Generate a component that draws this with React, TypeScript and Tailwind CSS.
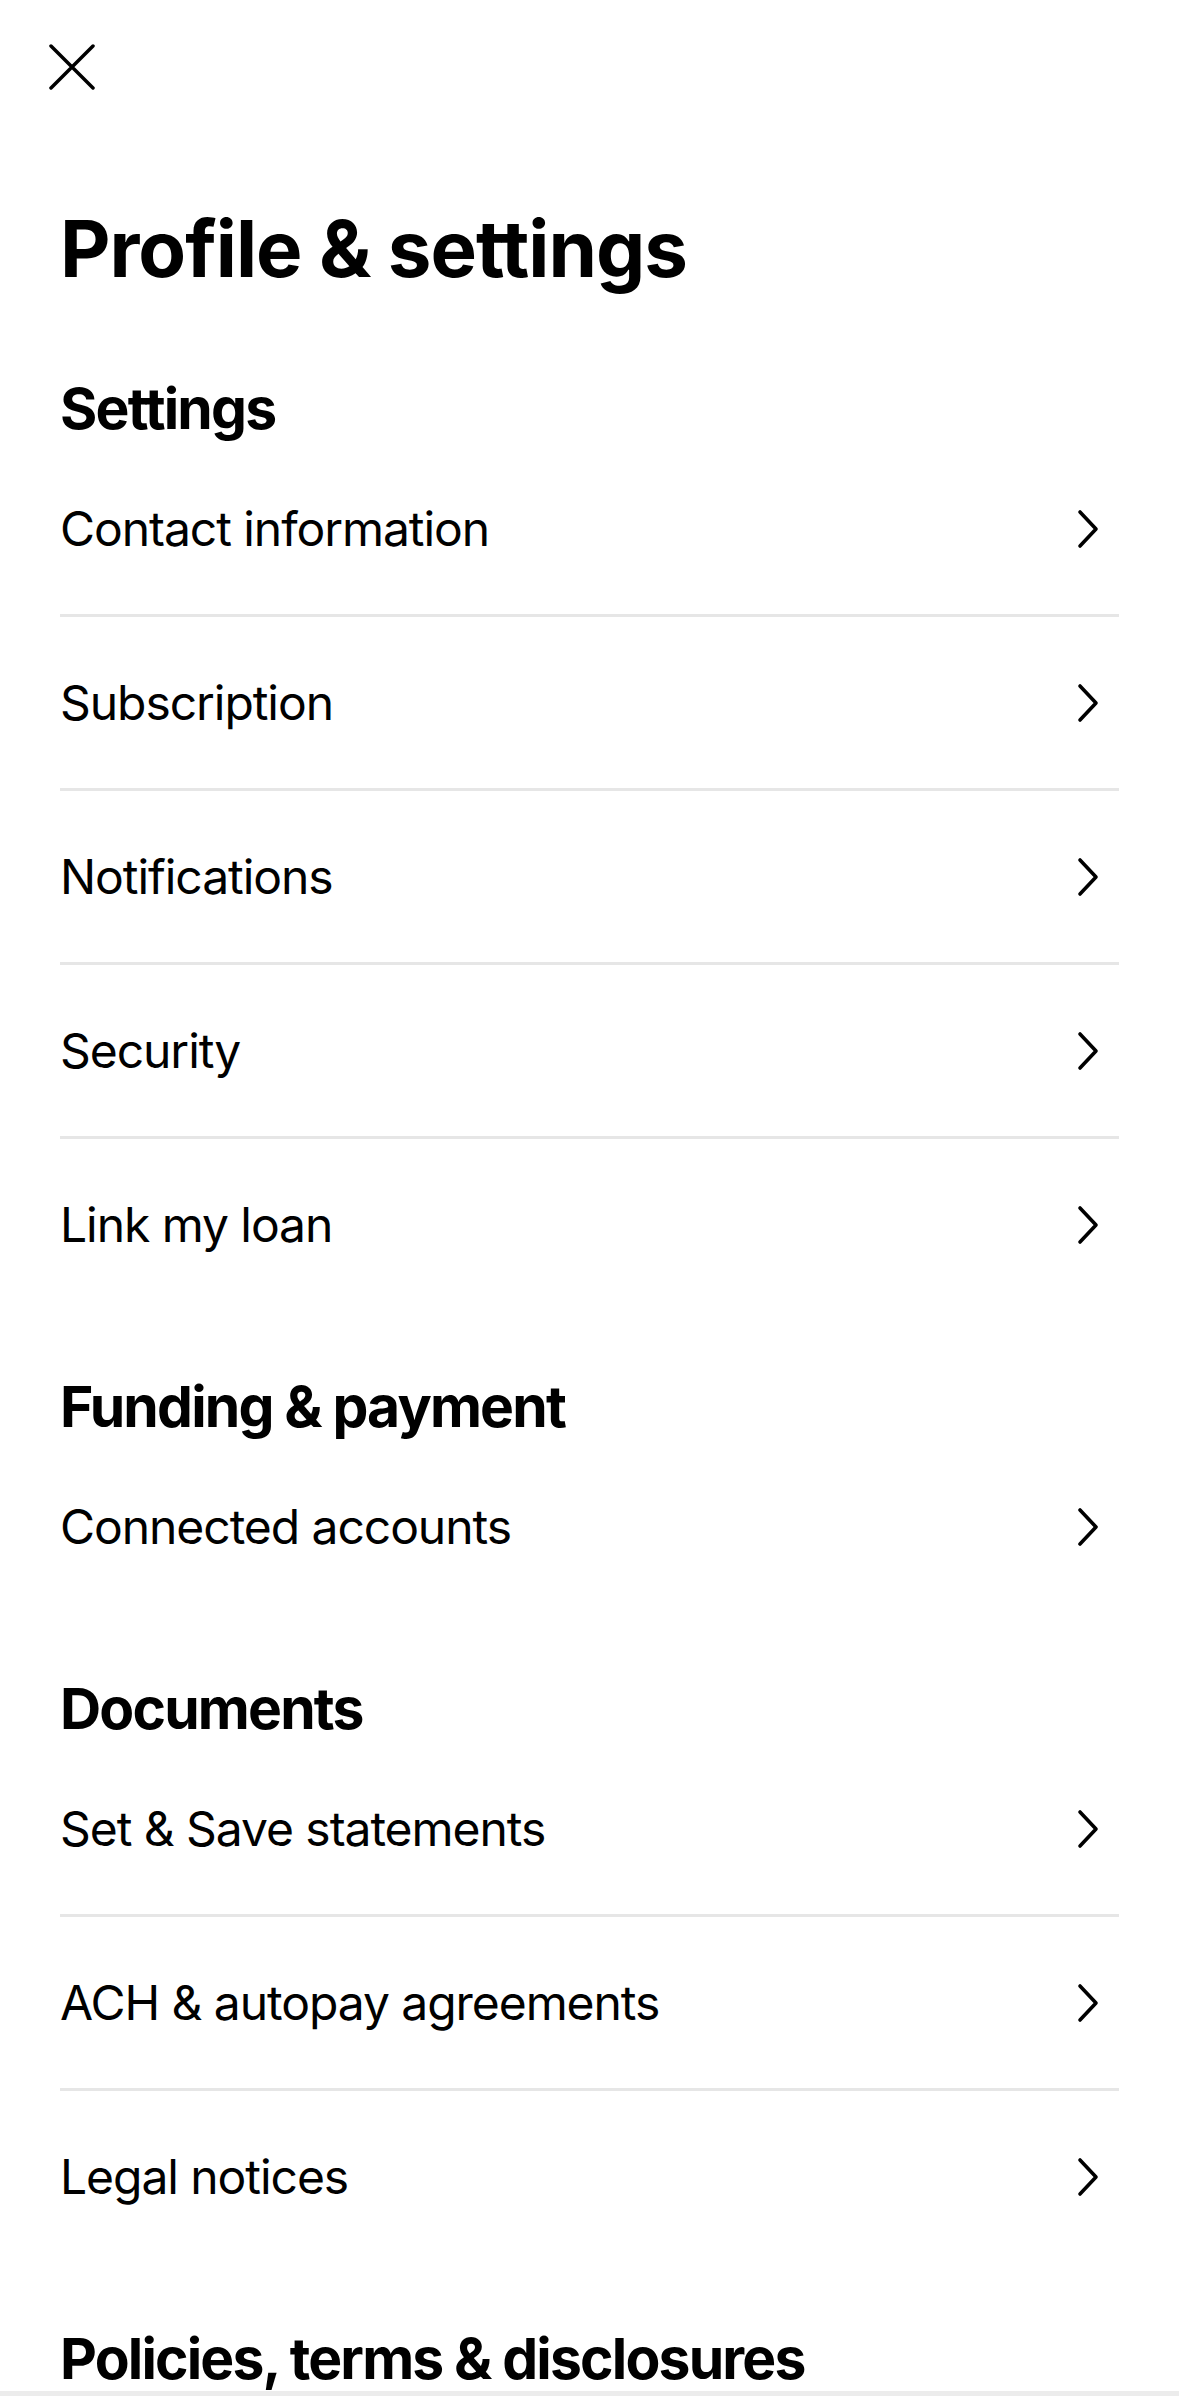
import React from 'react';

type Section = {
  title: string;
  items: string[];
};

const sections: Section[] = [
  {
    title: 'Settings',
    items: ['Contact information', 'Subscription', 'Notifications', 'Security', 'Link my loan'],
  },
  {
    title: 'Funding & payment',
    items: ['Connected accounts'],
  },
  {
    title: 'Documents',
    items: ['Set & Save statements', 'ACH & autopay agreements', 'Legal notices'],
  },
  {
    title: 'Policies, terms & disclosures',
    items: [],
  },
];

const CloseIcon = () => (
  <svg width="46" height="46" viewBox="0 0 46 46" fill="none">
    <path d="M2 2L44 44M44 2L2 44" stroke="#000" strokeWidth="3.5" strokeLinecap="round" />
  </svg>
);

const Chevron = () => (
  <svg width="24" height="40" viewBox="0 0 24 40" fill="none">
    <path
      d="M4 3L20 20L4 37"
      stroke="#000"
      strokeWidth="3.6"
      strokeLinecap="round"
      strokeLinejoin="round"
    />
  </svg>
);

const Row = ({ label, last }: { label: string; last: boolean }) => (
  <div>
    <button className="w-full h-[171px] flex items-center justify-between pr-[19px] text-left">
      <span className="text-[48px] leading-none font-normal tracking-[-0.022em] text-black">
        {label}
      </span>
      <Chevron />
    </button>
    {!last && <div className="h-[3px] bg-[#e6e6e6]" />}
  </div>
);

export default function App() {
  return (
    <div
      className="w-[1179px] h-[2396px] overflow-hidden bg-white flex flex-col"
      style={{ fontFamily: 'Inter, "Noto Sans", "Liberation Sans", sans-serif' }}
    >
      <div className="pl-[49px] pt-[44px]">
        <CloseIcon />
      </div>

      <div className="px-[60px]">
        <h1 className="mt-[120px] text-[78px] leading-none font-bold tracking-[-0.013em] text-black">
          Profile &amp; settings
        </h1>

        {sections.map((section, i) => (
          <section key={section.title} className={i === 0 ? 'mt-[92px]' : 'mt-[68px]'}>
            <h2 className="text-[57px] leading-none font-bold tracking-[-0.032em] text-black">
              {section.title}
            </h2>
            {section.items.length > 0 && (
              <div className="mt-[6px]">
                {section.items.map((item, j) => (
                  <Row key={item} label={item} last={j === section.items.length - 1} />
                ))}
              </div>
            )}
          </section>
        ))}
      </div>

      <div className="mt-[4px] h-[12px] bg-[#ececec]" />
    </div>
  );
}
